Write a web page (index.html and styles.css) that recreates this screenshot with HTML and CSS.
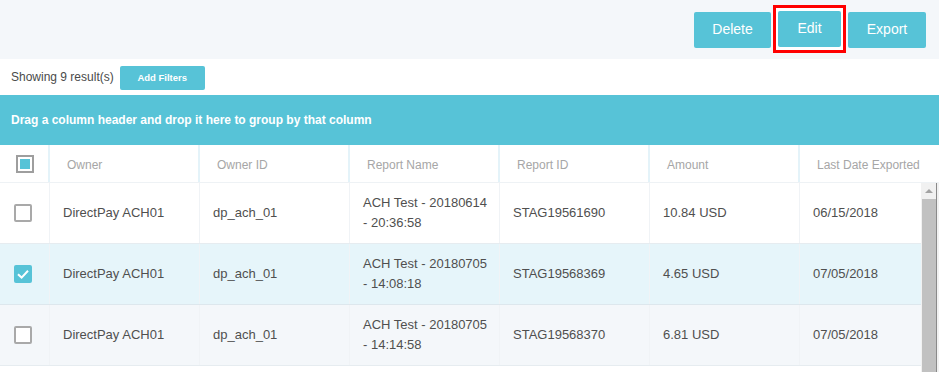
FILE: index.html
```html
<!DOCTYPE html>
<html lang="en">
<head>
  <meta charset="UTF-8" />
  <meta name="viewport" content="width=device-width, initial-scale=1.0" />
  <title>Exported Reports</title>
  <link rel="stylesheet" href="styles.css">
</head>
<body>
  <div class="toolbar">
    <button class="btn btn-delete">Delete</button>
    <div class="resaltado">
      <button class="btn btn-edit">Edit</button>
    </div>
    <button class="btn btn-export">Export</button>
  </div>

  <div class="resultados">
    <span>Showing 9 result(s)</span>
    <button class="btn-filtros">Add Filters</button>
  </div>

  <div class="agrupar">Drag a column header and drop it here to group by that column</div>

  <div class="cabecera">
    <div class="celda-check"><span class="check check-parcial"><span></span></span></div>
    <div class="th">Owner</div>
    <div class="th">Owner ID</div>
    <div class="th">Report Name</div>
    <div class="th">Report ID</div>
    <div class="th">Amount</div>
    <div class="th">Last Date Exported</div>
  </div>

  <div class="cuerpo">
    <div class="filas">
      <div class="fila">
        <div class="celda-check"><span class="check"></span></div>
        <div class="td">DirectPay ACH01</div>
        <div class="td">dp_ach_01</div>
        <div class="td">ACH Test - 20180614 - 20:36:58</div>
        <div class="td">STAG19561690</div>
        <div class="td">10.84 USD</div>
        <div class="td">06/15/2018</div>
      </div>
      <div class="fila seleccionada">
        <div class="celda-check">
          <span class="check marcado">
            <svg width="18" height="18" viewBox="0 0 18 18"><polyline points="4,9.2 7.6,12.6 14,5.8" fill="none" stroke="#fff" stroke-width="2" /></svg>
          </span>
        </div>
        <div class="td">DirectPay ACH01</div>
        <div class="td">dp_ach_01</div>
        <div class="td">ACH Test - 20180705 - 14:08:18</div>
        <div class="td">STAG19568369</div>
        <div class="td">4.65 USD</div>
        <div class="td">07/05/2018</div>
      </div>
      <div class="fila alterna">
        <div class="celda-check"><span class="check"></span></div>
        <div class="td">DirectPay ACH01</div>
        <div class="td">dp_ach_01</div>
        <div class="td">ACH Test - 20180705 - 14:14:58</div>
        <div class="td">STAG19568370</div>
        <div class="td">6.81 USD</div>
        <div class="td">07/05/2018</div>
      </div>
    </div>
    <div class="scroll">
      <div class="scroll-flecha"><span></span></div>
      <div class="scroll-barra"></div>
    </div>
  </div>
</body>
</html>
```

FILE: styles.css
```css
body {
  margin: 0;
  font-family: 'Liberation Sans', Arial, sans-serif;
  background-color: #fff;
  color: #4f4f4f;
  height: 372px;
  overflow: hidden;
}

/* barra superior */
.toolbar {
  background-color: #f4f7fa;
  height: 59px;
  display: flex;
  justify-content: flex-end;
  align-items: center;
  gap: 2px;
  padding-right: 13px;
}

.btn {
  background-color: #57c3d7;
  color: #fff;
  border: none;
  border-radius: 2px;
  height: 36px;
  font-family: inherit;
  font-size: 14px;
  padding: 0 0 2px;
}

.btn-delete {
  width: 77px;
}

.btn-edit {
  width: 63px;
  display: block;
}

.btn-export {
  width: 78px;
}

.resaltado {
  border: 3px solid #f00;
  padding: 3px 2px;
  background-color: #fff;
  margin-top: -1px;
}

/* resultados */
.resultados {
  height: 36px;
  display: flex;
  align-items: center;
  gap: 6px;
  padding-left: 11px;
  font-size: 12px;
  color: #4a4a4a;
}

.btn-filtros {
  background-color: #57c3d7;
  color: #fff;
  border: none;
  border-radius: 2px;
  width: 85px;
  height: 24px;
  font-family: inherit;
  font-size: 9.5px;
  font-weight: bold;
  padding: 0;
  margin-top: 1px;
}

.agrupar {
  background-color: #57c3d7;
  color: #fff;
  height: 50px;
  display: flex;
  align-items: center;
  padding-left: 11px;
  font-size: 12px;
  font-weight: bold;
}

/* tabla */
.cabecera {
  display: grid;
  grid-template-columns: 48px 150px 150px 150px 150px 150px 1fr;
  height: 37px;
  border-bottom: 1px solid #eef2f5;
}

.th {
  border-left: 2px solid #e4f3f9;
  padding: 2px 0 0 17px;
  display: flex;
  align-items: center;
  font-size: 12px;
  color: #a6a6a6;
}

.celda-check {
  display: flex;
  align-items: center;
  padding-left: 14px;
}

.cabecera .celda-check {
  padding-left: 16px;
}

.check {
  width: 18px;
  height: 18px;
  box-sizing: border-box;
  border: 2px solid #a9a9a9;
  border-radius: 2px;
  background-color: #fff;
  display: block;
}

.check-parcial {
  padding: 2px;
  border-color: #9e9e9e;
  border-radius: 0;
}

.check-parcial span {
  display: block;
  width: 10px;
  height: 10px;
  background-color: #57c3d7;
}

.check.marcado {
  border: none;
  background-color: #57c3d7;
}

.check svg {
  display: block;
}

.cuerpo {
  display: flex;
  height: 190px;
}

.filas {
  width: 921px;
}

.fila {
  display: grid;
  grid-template-columns: 49px 150px 150px 150px 150px 150px 1fr;
  height: 60px;
  border-bottom: 1px solid #e6ecf0;
  font-size: 13px;
}

.td {
  border-left: 1px solid #f0f3f6;
  padding: 0 9px 0 13px;
  display: flex;
  align-items: center;
  line-height: 20px;
}

.seleccionada {
  background-color: #e6f5fa;
  border-bottom-color: #dde7ed;
}

.alterna {
  background-color: #f4f7fa;
}

/* barra de desplazamiento */
.scroll {
  width: 18px;
  background-color: #f1f1f1;
  display: flex;
  flex-direction: column;
  box-shadow: inset -2px 0 0 #f1f1f1, inset -3px 0 0 #8a8a8a;
}

.scroll-flecha {
  height: 16px;
  display: flex;
  justify-content: center;
  align-items: center;
  padding-right: 3px;
}

.scroll-flecha span {
  width: 0;
  height: 0;
  border-left: 4px solid transparent;
  border-right: 4px solid transparent;
  border-bottom: 4px solid #a3a3a3;
}

.scroll-barra {
  flex: 1;
  width: 14px;
  margin-left: 1px;
  background-color: #c1c1c1;
}
```
